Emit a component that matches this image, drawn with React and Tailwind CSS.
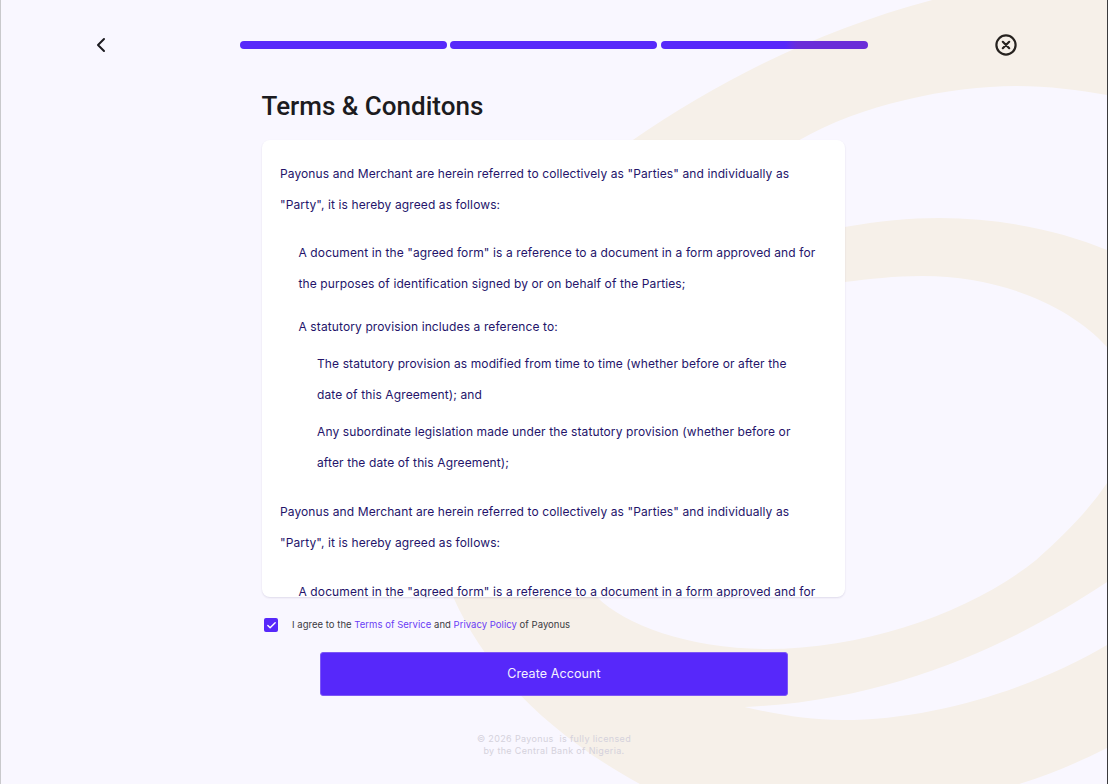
import React from 'react';
import { ChevronLeft, Check } from 'lucide-react';

const Swirl = () => (
    <svg className="absolute inset-0 w-full h-full" viewBox="0 0 1108 784" fill="#f6f0e9" preserveAspectRatio="none">
        <path d="M1108 0 L933 0 C820 30 720 80 633 140 L600 165 L770 165 L800 140 C860 105 950 86 1017 86 C1050 86 1080 90 1108 95 Z" />
        <path d="M830 230 L845 227 C880 221 910 218 940 218 C1000 218 1060 230 1108 250 L1108 347 C1070 305 1000 276 923 276 C895 276 870 279 845 282 L830 285 Z" />
        <path d="M450 590 L590 590 L597 597 C625 625 690 649 767 649 C870 649 975 610 1037 560 C1065 535 1090 510 1108 483 L1108 582 C1020 640 900 700 745 707 C780 715 810 720 843 720 C940 720 1040 685 1108 645 L1108 748 C1080 762 1050 775 1020 784 L640 784 C560 740 490 680 453 597 Z" />
    </svg>
);

const CloseIcon = () => (
    <svg width="24" height="24" viewBox="0 0 24 24" fill="none" stroke="#26221f" strokeWidth="2.2" strokeLinecap="round">
        <circle cx="12" cy="12" r="9.6" />
        <path d="M8.8 8.8 L15.2 15.2 M15.2 8.8 L8.8 15.2" />
    </svg>
);

const App = () => {
    return (
        <div className="relative h-[784px] w-full overflow-hidden bg-[#f9f7ff] border-l border-l-[#c9c9cc] border-r border-r-[#3a3a3c] font-['Inter',sans-serif]">
            <Swirl />
            <div className="relative flex flex-col">
                <div className="flex items-center pt-[33px] pl-[88px]">
                    <ChevronLeft size={24} strokeWidth={2} className="text-[#1c1b20]" />
                    <div className="flex w-[628px] ml-[127px]">
                        <div className="h-2 w-[207px] rounded-full bg-[#5728fa]" />
                        <div className="h-2 w-[207px] ml-[3px] mr-[4px] rounded-full bg-[#5728fa]" />
                        <div className="h-2 w-[207px] rounded-full bg-linear-to-r from-[#5728fa] from-[60%] to-[#6a2dd8] to-[66%]" />
                    </div>
                    <div className="ml-[126px]">
                        <CloseIcon />
                    </div>
                </div>

                <div className="ml-[261px] w-[583px]">
                    <h1 className="mt-[31px] -ml-[0.5px] text-[26px] leading-[36px] font-medium text-[#1c1b20] font-['Roboto',sans-serif]">Terms &amp; Conditons</h1>

                    <div className="mt-[16px] h-[457px] overflow-hidden rounded-lg bg-white shadow-[0_1px_2px_rgba(30,20,80,0.12)] pt-[18px] px-[18px] text-[12px] leading-[31px] tracking-[0.11px] text-[#24146a]">
                        <p>Payonus and Merchant are herein referred to collectively as "Parties" and individually as "Party", it is hereby agreed as follows:</p>
                        <p className="mt-[17px] ml-[18.5px]">A document in the "agreed form" is a reference to a document in a form approved and for the purposes of identification signed by or on behalf of the Parties;</p>
                        <p className="mt-[12px] ml-[18.5px]">A statutory provision includes a reference to:</p>
                        <p className="mt-[6px] ml-[37px] pr-[28px]">The statutory provision as modified from time to time (whether before or after the date of this Agreement); and</p>
                        <p className="mt-[6px] ml-[37px] pr-[28px]">Any subordinate legislation made under the statutory provision (whether before or after the date of this Agreement);</p>
                        <p className="mt-[18px]">Payonus and Merchant are herein referred to collectively as "Parties" and individually as "Party", it is hereby agreed as follows:</p>
                        <p className="mt-[18px] ml-[18.5px]">A document in the "agreed form" is a reference to a document in a form approved and for the purposes of identification signed by or on behalf of the Parties;</p>
                    </div>

                    <div className="mt-[21px] flex items-center pl-[2px]">
                        <div className="flex h-[14px] w-[14px] items-center justify-center rounded-[2px] bg-[#5728fa]">
                            <Check size={11} strokeWidth={3} className="text-white" />
                        </div>
                        <p className="ml-[14px] text-[9.5px] leading-[14px] tracking-[0.03px] text-[#3b3a42]">
                            I agree to the <span className="text-[#6a3df5]">Terms of Service</span> and <span className="text-[#6a3df5]">Privacy Policy</span> of Payonus
                        </p>
                    </div>

                    <button className="mt-[20px] ml-[58px] block h-[44px] w-[468px] rounded-[3px] border border-[#7d57f5] bg-[#5728fa] text-[12.5px] tracking-[0.1px] text-[#f4f1ff]">
                        Create Account
                    </button>

                    <p className="mt-[37px] ml-[58px] w-[468px] text-center text-[9px] leading-[12px] tracking-[0.35px] text-[#d5d2dc]">
                        © 2026 Payonus&nbsp; is fully licensed<br />by the Central Bank of Nigeria.
                    </p>
                </div>
            </div>
        </div>
    );
};

export default App;
